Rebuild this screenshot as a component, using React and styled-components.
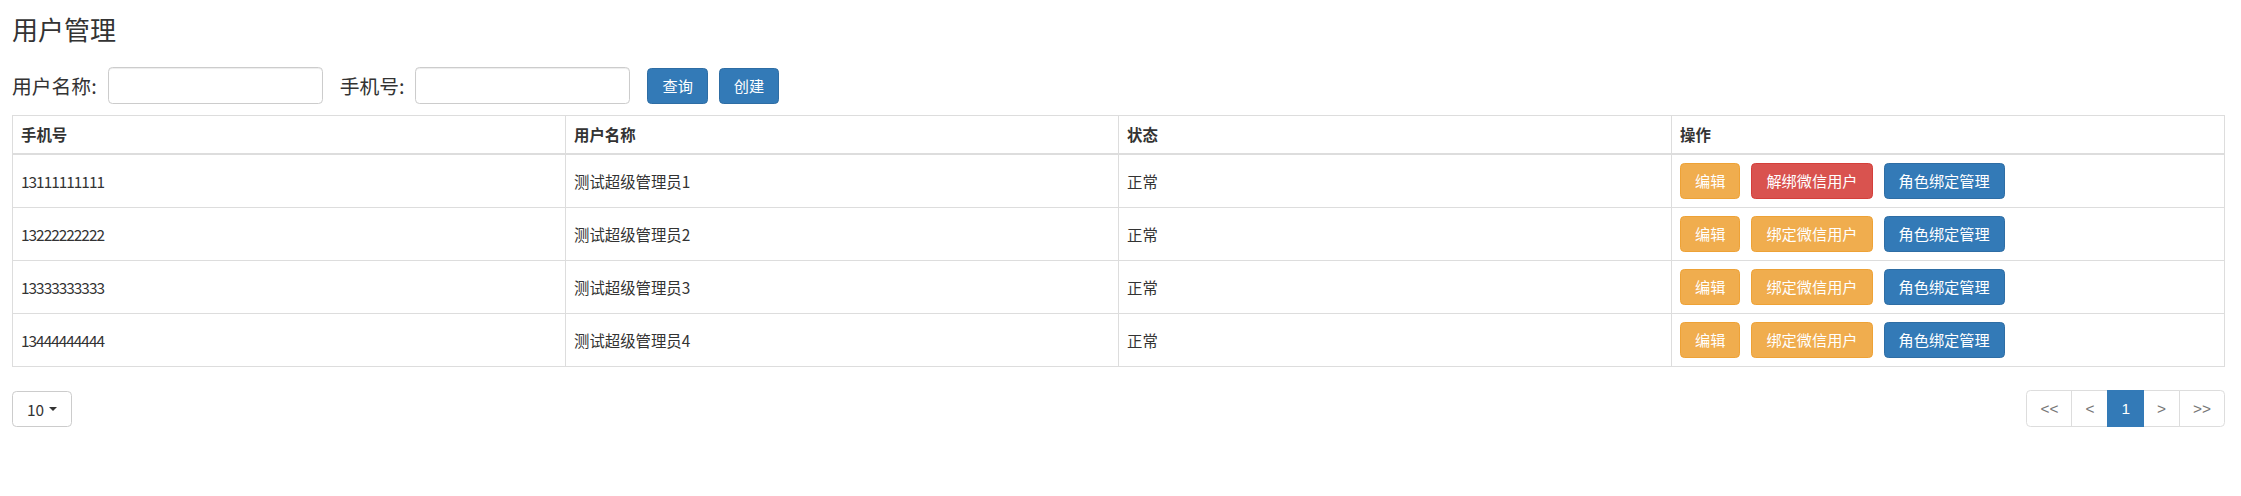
import React from "react";
import styled, { createGlobalStyle, css } from "styled-components";

const users = [
  { phone: "13111111111", name: "测试超级管理员1", status: "正常", wechatBound: true },
  { phone: "13222222222", name: "测试超级管理员2", status: "正常", wechatBound: false },
  { phone: "13333333333", name: "测试超级管理员3", status: "正常", wechatBound: false },
  { phone: "13444444444", name: "测试超级管理员4", status: "正常", wechatBound: false },
];

const pages = [
  { label: "<<" },
  { label: "<" },
  { label: "1", active: true },
  { label: ">" },
  { label: ">>" },
];

const UserManage = () => {
  return (
    <Page>
      <GlobalStyle />
      <Title>用户管理</Title>
      <SearchBar>
        <Label>用户名称:</Label>
        <Input type="text" />
        <Label>手机号:</Label>
        <Input type="text" />
        <Button variant="primary">查询</Button>
        <Button variant="primary">创建</Button>
      </SearchBar>
      <Table>
        <colgroup>
          <col />
          <col />
          <col />
          <col />
        </colgroup>
        <thead>
          <tr>
            <Th>手机号</Th>
            <Th>用户名称</Th>
            <Th>状态</Th>
            <Th>操作</Th>
          </tr>
        </thead>
        <tbody>
          {users.map((user) => (
            <tr key={user.phone}>
              <Td numeric>{user.phone}</Td>
              <Td>{user.name}</Td>
              <Td>{user.status}</Td>
              <Td>
                <Actions>
                  <Button variant="warning">编辑</Button>
                  {user.wechatBound ? (
                    <Button variant="danger">解绑微信用户</Button>
                  ) : (
                    <Button variant="warning">绑定微信用户</Button>
                  )}
                  <Button variant="primary">角色绑定管理</Button>
                </Actions>
              </Td>
            </tr>
          ))}
        </tbody>
      </Table>
      <Footer>
        <PageSize>
          10
          <Caret />
        </PageSize>
        <Pagination>
          {pages.map((p, i) => (
            <PageItem key={i} active={p.active} first={i === 0} last={i === pages.length - 1}>
              {p.label}
            </PageItem>
          ))}
        </Pagination>
      </Footer>
    </Page>
  );
};

const GlobalStyle = createGlobalStyle`
  html, body {
    margin: 0;
    padding: 0;
    background: #fff;
  }
  body {
    font-family: "Noto Sans CJK SC", "Liberation Sans", sans-serif;
    font-size: 15.4px;
    color: #333;
  }
  * {
    box-sizing: border-box;
  }
`;

const colors = {
  primary: { bg: "#337ab7", border: "#2e6da4" },
  warning: { bg: "#f0ad4e", border: "#eea236" },
  danger: { bg: "#d9534f", border: "#d43f3a" },
};

const Page = styled.div`
  padding: 13px 16px 0 12px;
`;

const Title = styled.h3`
  margin: 0;
  font-size: 26px;
  line-height: 32px;
  font-weight: 400;
  color: #333;
`;

const SearchBar = styled.div`
  display: flex;
  align-items: center;
  height: 37px;
  margin-top: 22px;
`;

const Label = styled.label`
  font-size: 19.8px;
  line-height: 1;
  margin-right: 11px;
`;

const Input = styled.input`
  width: 215px;
  height: 37px;
  margin-right: 17px;
  padding: 6px 12px;
  border: 1px solid #ccc;
  border-radius: 4.4px;
  font: inherit;
  box-shadow: inset 0 1px 1px rgba(0, 0, 0, 0.075);
`;

const Button = styled.button`
  height: 36px;
  padding: 0 14px;
  border: 1px solid ${(p) => colors[p.variant].border};
  border-radius: 4.4px;
  background: ${(p) => colors[p.variant].bg};
  color: #fff;
  font-family: inherit;
  font-size: 15.2px;
  line-height: 1;
  white-space: nowrap;
  & + & {
    margin-left: 11px;
  }
`;

const Table = styled.table`
  width: 100%;
  margin-top: 11px;
  table-layout: fixed;
  border-collapse: collapse;
  border: 1px solid #ddd;
  col {
    width: 25%;
  }
`;

const Th = styled.th`
  padding: 8px;
  line-height: 21px;
  text-align: left;
  font-weight: 700;
  border: 1px solid #ddd;
  border-bottom-width: 2px;
`;

const Td = styled.td`
  height: 53px;
  padding: 8px;
  line-height: 21px;
  vertical-align: middle;
  border: 1px solid #ddd;
  letter-spacing: ${(p) => (p.numeric ? "-1px" : "normal")};
`;

const Actions = styled.div`
  display: flex;
  align-items: center;
`;

const Footer = styled.div`
  display: flex;
  justify-content: space-between;
  align-items: center;
  margin-top: 23px;
`;

const PageSize = styled.button`
  display: flex;
  align-items: center;
  height: 36px;
  padding: 0 14px;
  border: 1px solid #ccc;
  border-radius: 4.4px;
  background: #fff;
  color: #333;
  font-family: inherit;
  font-size: 15.4px;
`;

const Caret = styled.span`
  display: inline-block;
  width: 0;
  height: 0;
  margin-left: 5px;
  border-top: 4.5px solid #333;
  border-left: 4.5px solid transparent;
  border-right: 4.5px solid transparent;
`;

const Pagination = styled.ul`
  display: flex;
  margin: 0;
  padding: 0;
  list-style: none;
`;

const PageItem = styled.li`
  display: flex;
  align-items: center;
  height: 37px;
  padding: 0 13px;
  border: 1px solid #ddd;
  margin-left: -1px;
  background: #fff;
  color: #777;
  font-family: "Liberation Sans", "Noto Sans CJK SC", sans-serif;
  font-size: 15.4px;
  ${(p) =>
    p.first &&
    css`
      margin-left: 0;
      border-radius: 4.4px 0 0 4.4px;
    `}
  ${(p) =>
    p.last &&
    css`
      border-radius: 0 4.4px 4.4px 0;
    `}
  ${(p) =>
    p.active &&
    css`
      position: relative;
      background: #337ab7;
      border-color: #337ab7;
      color: #fff;
    `}
`;

export default UserManage;
